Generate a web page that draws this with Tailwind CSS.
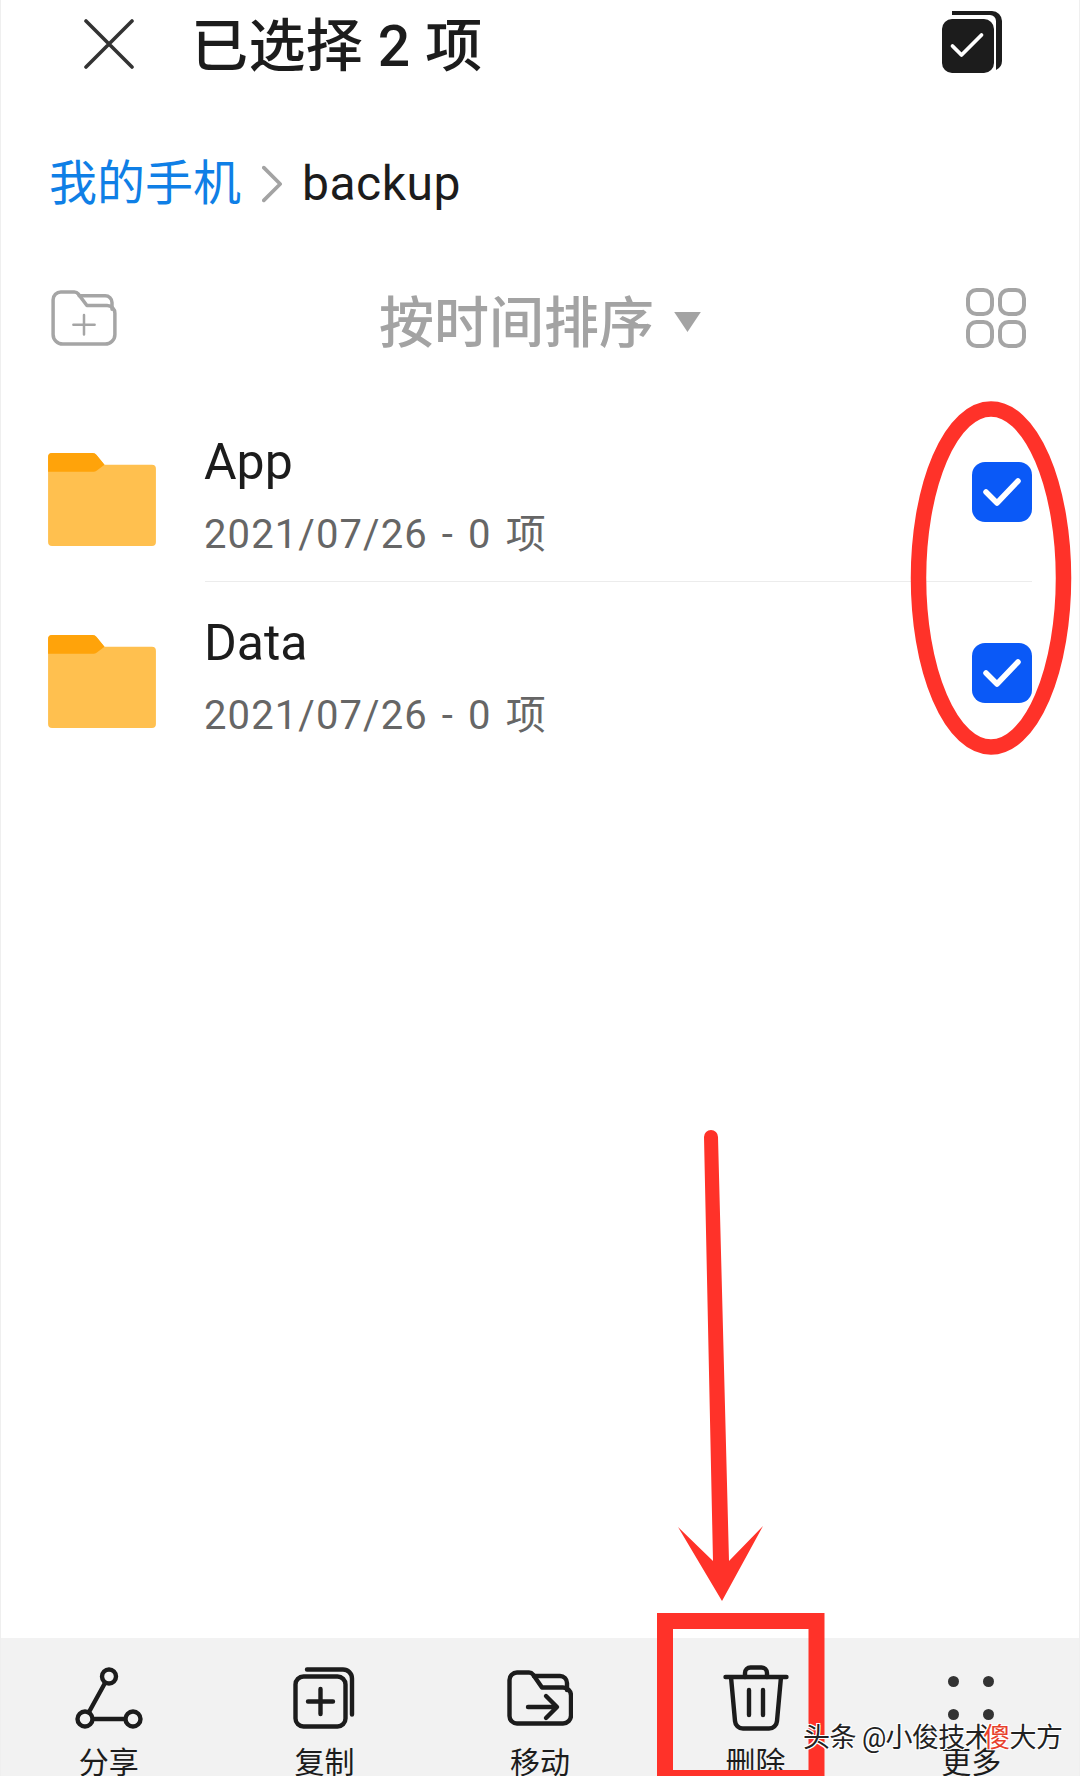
<!DOCTYPE html>
<html lang="zh">
<head>
<meta charset="utf-8">
<script src="https://cdn.jsdelivr.net/npm/@tailwindcss/browser@4"></script>
</head>
<body class="m-0">
<div class="relative w-[1080px] h-[1776px] overflow-hidden bg-white flex flex-col border-x border-[#efefef] font-['Roboto','Noto_Sans_CJK_SC',sans-serif]">

  <!-- title bar -->
  <header class="h-[90px] shrink-0 flex items-center pl-[83px] pr-[77px]">
    <svg class="w-[50px] h-[50px] -mt-[2px]" viewBox="0 0 50 50" fill="none" stroke="#333" stroke-width="3.6" stroke-linecap="round"><path d="M2 2 48 48M48 2 2 48"/></svg>
    <h1 class="ml-[57px] text-[57px] leading-none font-medium text-[#1c1c1c] whitespace-pre mt-[2px] tracking-[0.4px]">已选择 2 项</h1>
    <svg class="ml-auto w-[60px] h-[62px] -mt-[6px]" viewBox="0 0 60 62">
      <path d="M10 0h40a10 10 0 0 1 10 10v40a10 10 0 0 1-6 9V10a6 6 0 0 0-6-6H10z" fill="#1c1c1c"/>
      <rect x="0" y="8" width="52" height="54" rx="10" fill="#1c1c1c"/>
      <path d="M10.500 35l9 9 20-20" fill="none" stroke="#fff" stroke-width="3.8" stroke-linecap="round" stroke-linejoin="round"/>
    </svg>
  </header>

  <!-- breadcrumb -->
  <nav class="h-[100px] shrink-0 flex items-center pl-[48px] mt-[44px]">
    <span class="text-[48px] leading-none text-[#0f7fe6]">我的手机</span>
    <svg class="ml-[21px] w-[20px] h-[38px]" viewBox="0 0 22 40" fill="none" stroke="#a3a3a3" stroke-width="4" stroke-linecap="round" stroke-linejoin="round"><path d="M2 2 20 20 2 38"/></svg>
    <span class="ml-[20px] text-[48px] leading-none text-[#1c1c1c] tracking-[0.5px]">backup</span>
  </nav>

  <!-- sort row -->
  <div class="h-[100px] shrink-0 flex items-center pl-[50px] pr-[53px] mt-[39px]">
    <svg class="w-[66px] h-[56px] -mt-[10px]" viewBox="0 0 68 58" fill="none" stroke="#a5a5a5" stroke-width="3.6" stroke-linecap="round" stroke-linejoin="round">
      <path d="M2 44V10a8 8 0 0 1 8-8h14a5 5 0 0 1 4 2l9 12h21a8 8 0 0 1 8 8v22a10 10 0 0 1-10 10H12A10 10 0 0 1 2 46z"/>
      <path d="M29 6h27a7 7 0 0 1 7 7v7"/>
      <path d="M23 36h22M34 26v20" stroke-width="2.6"/>
    </svg>
    <div class="ml-[262px] flex items-center">
      <span class="text-[55px] leading-none font-medium text-[#a3a3a3]">按时间排序</span>
      <svg class="ml-[20px] w-[27px] h-[20px] mt-[-3px]" viewBox="0 0 28 21"><path d="M0 0h28L14 21z" fill="#a3a3a3"/></svg>
    </div>
    <svg class="ml-auto w-[60px] h-[60px] -mt-[10px]" viewBox="0 0 60 60" fill="none" stroke="#a5a5a5" stroke-width="4">
      <rect x="2" y="2" width="24" height="24" rx="8.5"/><rect x="34" y="2" width="24" height="24" rx="8.5"/>
      <rect x="2" y="34" width="24" height="24" rx="8.5"/><rect x="34" y="34" width="24" height="24" rx="8.5"/>
    </svg>
  </div>

  <!-- file list -->
  <ul class="shrink-0 mt-[28px]">
    <li class="h-[181px] flex pl-[47px] pr-[47px]">
      <svg class="w-[108px] h-[93px] mt-[52px] shrink-0" viewBox="0 0 109 94">
        <path d="M4 0h41a5 5 0 0 1 4 2l8 10h48a4 4 0 0 1 4 4v74a4 4 0 0 1-4 4H4a4 4 0 0 1-4-4V4a4 4 0 0 1 4-4z" fill="#ffc04f"/>
        <path d="M4 0h41a5 5 0 0 1 4 2l8 10-8 6a5 5 0 0 1-3 1H0V4a4 4 0 0 1 4-4z" fill="#ffa30a"/>
      </svg>
      <div class="ml-[49px] flex-1 flex border-b border-[#ececec]">
        <div class="flex-1">
          <p class="mt-[33px] -ml-[1px] text-[50px] leading-[56px] text-[#1c1c1c]">App</p>
          <p class="mt-[22px] -ml-[1px] text-[40px] leading-[46px] text-[#666] whitespace-pre tracking-[1.1px] [word-spacing:3px]">2021/07/26 - 0 项</p>
        </div>
        <span class="mt-[61px] w-[60px] h-[60px] rounded-[13px] bg-[#0a59f7] flex items-center justify-center">
          <svg class="w-[38px] h-[30px]" viewBox="0 0 38 30" fill="none" stroke="#fff" stroke-width="5.5" stroke-linecap="round" stroke-linejoin="round"><path d="M3 15l11 11L35 4"/></svg>
        </span>
      </div>
    </li>
    <li class="h-[181px] flex pl-[47px] pr-[47px]">
      <svg class="w-[108px] h-[93px] mt-[53px] shrink-0" viewBox="0 0 109 94">
        <path d="M4 0h41a5 5 0 0 1 4 2l8 10h48a4 4 0 0 1 4 4v74a4 4 0 0 1-4 4H4a4 4 0 0 1-4-4V4a4 4 0 0 1 4-4z" fill="#ffc04f"/>
        <path d="M4 0h41a5 5 0 0 1 4 2l8 10-8 6a5 5 0 0 1-3 1H0V4a4 4 0 0 1 4-4z" fill="#ffa30a"/>
      </svg>
      <div class="ml-[49px] flex-1 flex">
        <div class="flex-1">
          <p class="mt-[33px] -ml-[1px] text-[50px] leading-[56px] text-[#1c1c1c]">Data</p>
          <p class="mt-[22px] -ml-[1px] text-[40px] leading-[46px] text-[#666] whitespace-pre tracking-[1.1px] [word-spacing:3px]">2021/07/26 - 0 项</p>
        </div>
        <span class="mt-[61px] w-[60px] h-[60px] rounded-[13px] bg-[#0a59f7] flex items-center justify-center">
          <svg class="w-[38px] h-[30px]" viewBox="0 0 38 30" fill="none" stroke="#fff" stroke-width="5.5" stroke-linecap="round" stroke-linejoin="round"><path d="M3 15l11 11L35 4"/></svg>
        </span>
      </div>
    </li>
  </ul>

  <!-- bottom toolbar -->
  <footer class="mt-auto h-[138px] shrink-0 bg-[#f2f2f2] grid grid-cols-5">
    <div class="flex flex-col items-center">
      <div class="h-[108px] flex items-end pb-[17px]">
        <svg class="w-[68px] h-[62px]" viewBox="0 0 68 62" fill="none" stroke="#1c1c1c" stroke-width="4.4" stroke-linecap="round">
          <circle cx="34" cy="9.5" r="7"/><circle cx="10" cy="52" r="7.5"/><circle cx="58" cy="52" r="7.5"/>
          <path d="M30 16 14 45M18 52h32"/>
        </svg>
      </div>
      <span class="text-[30px] leading-[34px] text-[#1c1c1c]">分享</span>
    </div>
    <div class="flex flex-col items-center">
      <div class="h-[108px] flex items-end pb-[17px]">
        <svg class="w-[62px] h-[62px]" viewBox="0 0 62 62" fill="none" stroke="#1c1c1c" stroke-width="4.4" stroke-linecap="round" stroke-linejoin="round">
          <rect x="2.5" y="9.5" width="50" height="50" rx="8"/>
          <path d="M14 2.5h36a9 9 0 0 1 9 9v36"/>
          <path d="M27.5 22v25M15 34.500h25"/>
        </svg>
      </div>
      <span class="text-[30px] leading-[34px] text-[#1c1c1c]">复制</span>
    </div>
    <div class="flex flex-col items-center">
      <div class="h-[108px] flex items-end pb-[20px]">
        <svg class="w-[66px] h-[56px]" viewBox="0 0 66 56" fill="none" stroke="#1c1c1c" stroke-width="4.4" stroke-linecap="round" stroke-linejoin="round">
          <path d="M2.500 44V10a7.500 7.500 0 0 1 7.500-7.500h12a5 5 0 0 1 4 2l9 13h21a8 8 0 0 1 8 8v20a8 8 0 0 1-8 8H10A7.500 7.500 0 0 1 2.500 46z"/>
          <path d="M27 6h26a7 7 0 0 1 7 7v7"/>
          <path d="M21 37h28M39 26l11 11-11 11"/>
        </svg>
      </div>
      <span class="text-[30px] leading-[34px] text-[#1c1c1c]">移动</span>
    </div>
    <div class="flex flex-col items-center">
      <div class="h-[108px] flex items-end pb-[15px]">
        <svg class="w-[66px] h-[66px]" viewBox="0 0 66 66" fill="none" stroke="#1c1c1c" stroke-width="4.4" stroke-linecap="round" stroke-linejoin="round">
          <path d="M2.500 12h61M8 12l4 44a8 8 0 0 0 8 7.500h26a8 8 0 0 0 8-7.500l4-44"/>
          <path d="M22 12V8a5.500 5.500 0 0 1 5.500-5.500h11A5.500 5.500 0 0 1 44 8v4"/>
          <path d="M26 25v25M40 25v25"/>
        </svg>
      </div>
      <span class="text-[30px] leading-[34px] text-[#1c1c1c]">删除</span>
    </div>
    <div class="flex flex-col items-center">
      <div class="h-[108px] flex items-end pb-[26px]">
        <svg class="w-[46px] h-[44px]" viewBox="0 0 46 44" fill="#333">
          <circle cx="5.500" cy="5.500" r="5.500"/><circle cx="40.500" cy="5.500" r="5.500"/><circle cx="5.500" cy="38.500" r="5.500"/><circle cx="40.500" cy="38.500" r="5.500"/>
        </svg>
      </div>
      <span class="text-[30px] leading-[34px] text-[#1c1c1c]">更多</span>
    </div>
  </footer>

  <!-- red annotations -->
  <svg class="absolute left-[-1px] top-0 w-[1080px] h-[1776px] pointer-events-none" viewBox="0 0 1080 1776" fill="none">
    <ellipse cx="991" cy="578" rx="72.500" ry="169" stroke="#ff3229" stroke-width="15.500"/>
    <path d="M704 1137a7 7 0 0 1 14 0L729 1561 763 1526 722 1601 678 1527 713 1561z" fill="#ff3229"/>
    <path d="M665 1776V1621H816.500V1776" stroke="#ff3229" stroke-width="16"/>
    <path d="M665 1773H816.500" stroke="#ff3229" stroke-width="6"/>
  </svg>

  <!-- watermark -->
  <p class="absolute left-[802px] top-[1723px] text-[27px] leading-[30px] whitespace-nowrap text-[#222] tracking-[-0.6px] [text-shadow:1px_1px_0_#fff,-1px_-1px_0_#fff,1px_-1px_0_#fff,-1px_1px_0_#fff]">头条 @小俊技术<span class="text-[#e8412c] -ml-[8px]">傻</span>大方</p>
</div>
</body>
</html>
